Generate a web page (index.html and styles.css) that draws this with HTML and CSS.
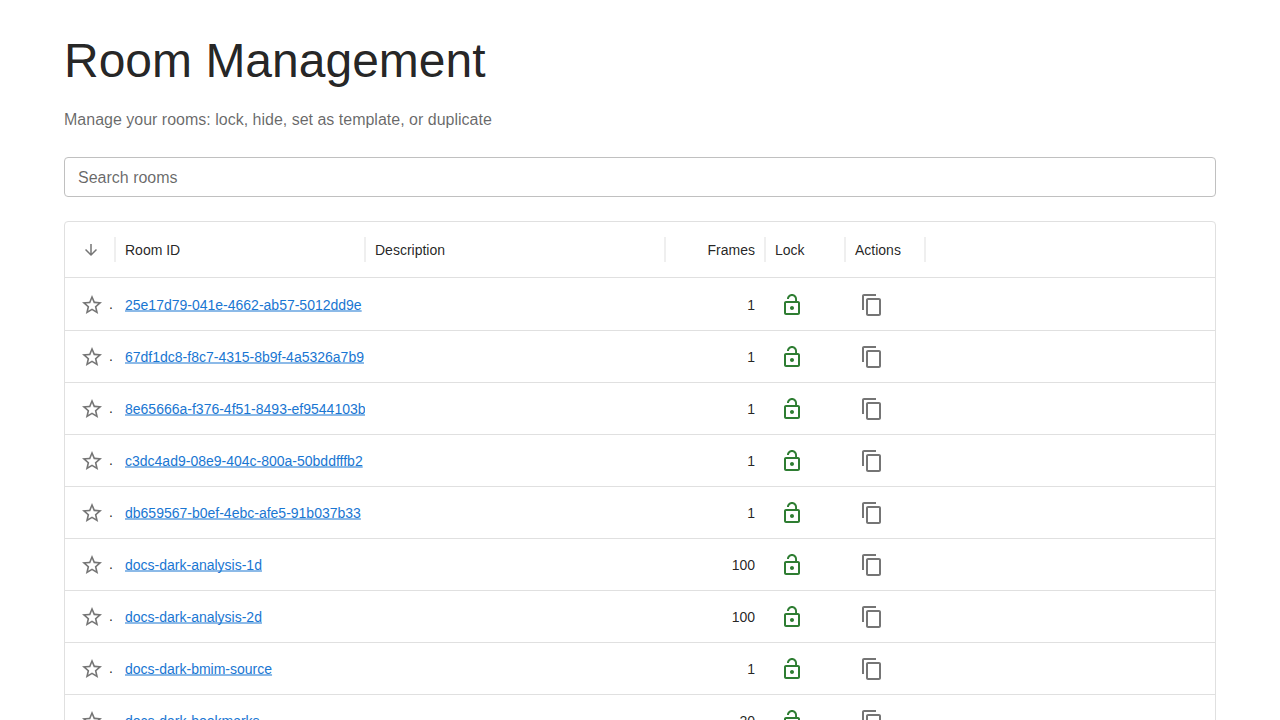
FILE: index.html
```html
<!DOCTYPE html>
<html lang="en">
    <head>
        <meta charset="utf-8">
        <title>Room Management</title>
        <link rel="stylesheet" href="styles.css">
    </head>
    <body>
        <!-- Shared icons -->
        <svg class="sprite" aria-hidden="true">
            <symbol id="icon-arrow" viewBox="0 0 24 24">
                <path d="m20 12-1.41-1.41L13 16.17V4h-2v12.17l-5.58-5.59L4 12l8 8 8-8z"/>
            </symbol>
            <symbol id="icon-star" viewBox="0 0 24 24">
                <path d="m22 9.24-7.19-.62L12 2 9.19 8.63 2 9.24l5.46 4.73L5.82 21 12 17.27 18.18 21l-1.63-7.03L22 9.24zM12 15.4l-3.76 2.27 1-4.28-3.32-2.88 4.38-.38L12 6.1l1.71 4.04 4.38.38-3.32 2.88 1 4.28L12 15.4z"/>
            </symbol>
            <symbol id="icon-unlocked" viewBox="0 0 24 24">
                <path d="M12 17c1.1 0 2-.9 2-2s-.9-2-2-2-2 .9-2 2 .9 2 2 2zm6-9h-1V6c0-2.76-2.24-5-5-5S7 3.24 7 6h1.9c0-1.71 1.39-3.1 3.1-3.1s3.1 1.39 3.1 3.1v2H6c-1.1 0-2 .9-2 2v10c0 1.1.9 2 2 2h12c1.1 0 2-.9 2-2V10c0-1.1-.9-2-2-2zm0 12H6V10h12v10z"/>
            </symbol>
            <symbol id="icon-copy" viewBox="0 0 24 24">
                <path d="M16 1H4c-1.1 0-2 .9-2 2v14h2V3h12V1zm3 4H8c-1.1 0-2 .9-2 2v14c0 1.1.9 2 2 2h11c1.1 0 2-.9 2-2V7c0-1.1-.9-2-2-2zm0 16H8V7h11v14z"/>
            </symbol>
        </svg>

        <main>
            <h1>Room Management</h1>
            <p class="subtitle">Manage your rooms: lock, hide, set as template, or duplicate</p>

            <input type="text" id="search" placeholder="Search rooms" aria-label="Search rooms">

            <div class="grid">
                <table>
                    <colgroup>
                        <col class="col-star">
                        <col class="col-id">
                        <col class="col-description">
                        <col class="col-frames">
                        <col class="col-lock">
                        <col class="col-actions">
                        <col>
                    </colgroup>
                    <thead>
                        <tr>
                            <th><button type="button" class="sort" aria-label="Sort"><svg><use href="#icon-arrow"/></svg></button></th>
                            <th>Room ID</th>
                            <th>Description</th>
                            <th class="number">Frames</th>
                            <th>Lock</th>
                            <th>Actions</th>
                            <td></td>
                        </tr>
                    </thead>
                    <tbody id="rooms"></tbody>
                </table>
            </div>
        </main>

        <script>
        var rooms = [
            { id: "25e17d79-041e-4662-ab57-5012dd9e", frames: 1 },
            { id: "67df1dc8-f8c7-4315-8b9f-4a5326a7b9", frames: 1 },
            { id: "8e65666a-f376-4f51-8493-ef9544103b", frames: 1 },
            { id: "c3dc4ad9-08e9-404c-800a-50bddfffb2", frames: 1 },
            { id: "db659567-b0ef-4ebc-afe5-91b037b33", frames: 1 },
            { id: "docs-dark-analysis-1d", frames: 100 },
            { id: "docs-dark-analysis-2d", frames: 100 },
            { id: "docs-dark-bmim-source", frames: 1 },
            { id: "docs-dark-bookmarks", frames: 20 }
        ];

        function iconButton(name, label){
            return '<button type="button" class="icon ' + name + '" aria-label="' + label + '">' +
                '<svg><use href="#icon-' + name + '"/></svg></button>';
        }

        var list = document.getElementById("rooms");

        for (var i = 0; i < rooms.length; i++){
            var row = document.createElement("tr");
            row.innerHTML =
                '<td class="star-cell">' + iconButton("star", "Set as template") + '.</td>' +
                '<td><a href="#' + rooms[i].id + '">' + rooms[i].id + '</a></td>' +
                '<td></td>' +
                '<td class="number">' + rooms[i].frames + '</td>' +
                '<td>' + iconButton("unlocked", "Lock room") + '</td>' +
                '<td>' + iconButton("copy", "Duplicate room") + '</td>' +
                '<td></td>';
            list.appendChild(row);
        }
        </script>
    </body>
</html>
```

FILE: styles.css
```css
* {
    box-sizing: border-box;
}

body {
    margin: 0;
    background: #fff;
    color: rgba(0, 0, 0, 0.87);
    font-family: "Liberation Sans", Arial, sans-serif;
    font-size: 14px;
}

.sprite {
    display: none;
}

main {
    max-width: 1200px;
    margin: 0 auto;
    padding: 33px 24px;
}

h1 {
    margin: 0 0 19px;
    font-size: 48px;
    font-weight: normal;
    line-height: 56px;
}

.subtitle {
    margin: 0 0 25px;
    color: rgba(0, 0, 0, 0.6);
    font-size: 16px;
    line-height: 24px;
}

#search {
    display: block;
    width: 100%;
    height: 40px;
    margin-bottom: 24px;
    padding: 2px 13px 0;
    border: 1px solid #c0c0c0;
    border-radius: 4px;
    color: inherit;
    font: inherit;
    font-size: 16px;
}

#search::placeholder {
    color: rgba(0, 0, 0, 0.6);
}

.grid {
    border: 1px solid #e0e0e0;
    border-radius: 4px;
}

table {
    width: 100%;
    table-layout: fixed;
    border-spacing: 0;
}

.col-star { width: 50px; }
.col-id { width: 250px; }
.col-description { width: 300px; }
.col-frames { width: 100px; }
.col-lock,
.col-actions { width: 80px; }

th,
td {
    padding: 0 10px;
    text-align: left;
    white-space: nowrap;
}

thead th,
thead td {
    position: relative;
    height: 56px;
    border-bottom: 1px solid #e0e0e0;
    font-weight: normal;
}

/* column separator, sits on the edge between two headers */
th::after {
    content: "";
    position: absolute;
    top: 15px;
    right: -1px;
    width: 2px;
    height: 25px;
    background: #efefef;
}

tbody td {
    height: 52px;
    padding-top: 1px;
    border-top: 1px solid #e0e0e0;
    overflow: hidden;
}

tbody tr:first-child td {
    border-top-color: transparent;
}

tbody td:nth-child(2) {
    padding-right: 0;
}

.number {
    text-align: right;
}

.star-cell {
    padding-right: 0;
}

a {
    color: #1976d2;
    text-decoration: underline 2px rgba(25, 118, 210, 0.5);
    text-underline-offset: 0;
    text-decoration-skip-ink: none;
}

button {
    padding: 5px;
    border: 0;
    background: none;
    color: rgba(0, 0, 0, 0.54);
    vertical-align: middle;
    cursor: pointer;
}

button svg {
    display: block;
    width: 24px;
    height: 24px;
    fill: currentColor;
}

.sort {
    padding: 7px;
}

.sort svg {
    width: 18px;
    height: 18px;
}

.unlocked {
    color: #2e7d32;
}
```
